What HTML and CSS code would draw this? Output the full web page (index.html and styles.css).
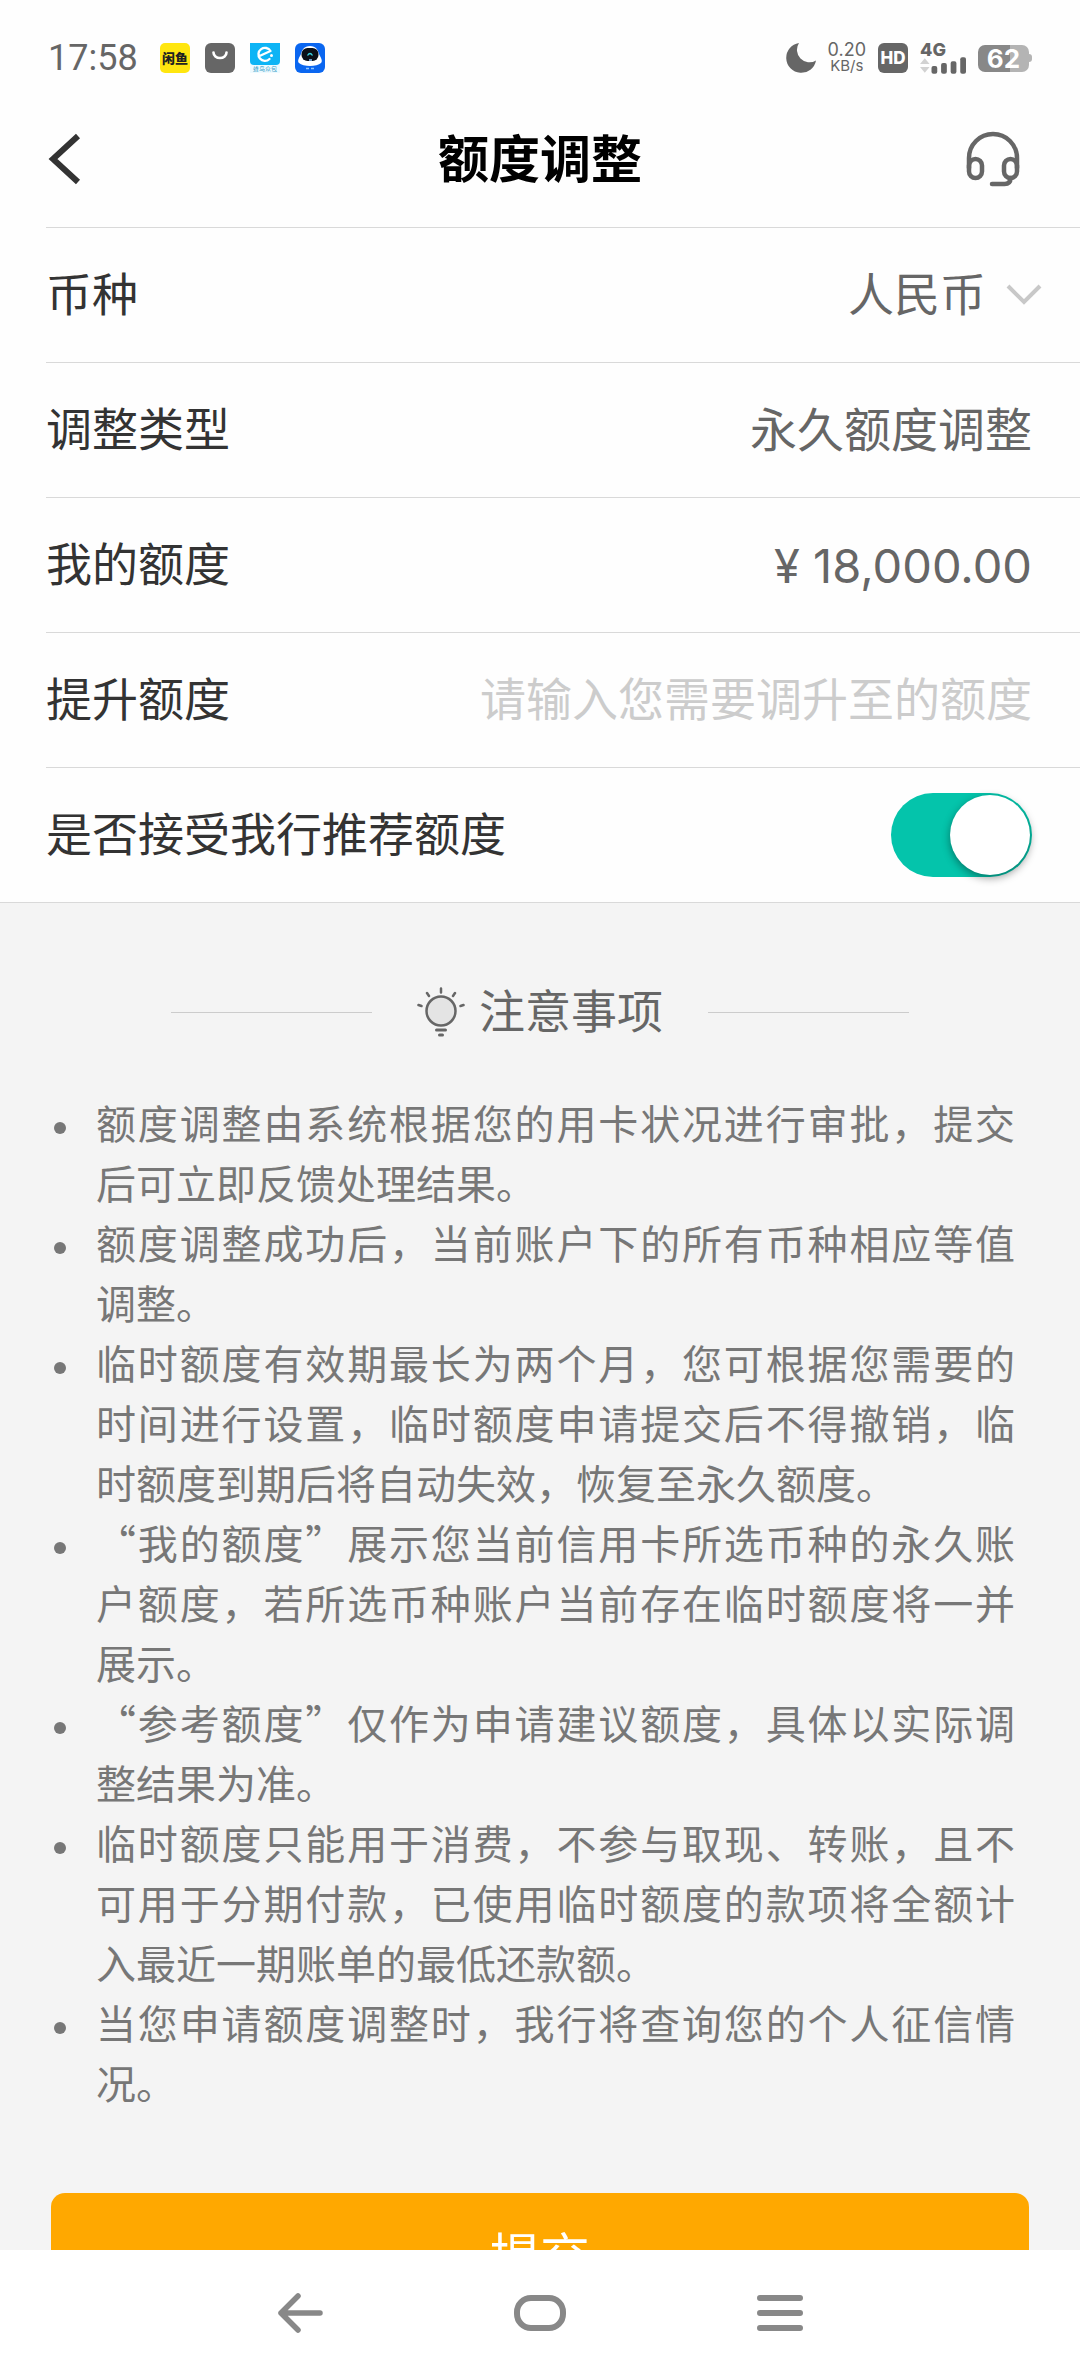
FILE: index.html
```html
<!DOCTYPE html>
<html lang="zh-CN">
  <head>
    <meta charset="UTF-8" />
    <meta name="viewport" content="width=device-width, initial-scale=1.0" />
    <title>额度调整</title>
    <link rel="stylesheet" href="styles.css">
  </head>
  <body>
    <div class="status-bar">
      <div class="status-left">
        <span class="time">17:58</span>
        <span class="app-icon app-fish">闲鱼</span>
        <svg class="app-icon" viewBox="0 0 30 30">
          <rect width="30" height="30" rx="6" fill="#666" />
          <path d="M8.500 9.500a6.500 5.500 0 0 0 13 0" fill="none" stroke="#fff" stroke-width="2.600" stroke-linecap="round" />
        </svg>
        <span class="app-icon app-ele">
          <svg viewBox="0 0 30 22">
            <path d="M0 0h30v18q0 4-4 4H4q-4 0-4-4z" fill="#0db4f5" />
            <path d="M9.500 13L20.500 8A6.500 6.500 0 1 0 19.500 16" fill="none" stroke="#fff" stroke-width="2.300" stroke-linecap="round" stroke-linejoin="round" />
            <circle cx="21.500" cy="12.500" r="1.500" fill="#fff" />
          </svg>
          <span class="app-ele-name">蜂鸟众包</span>
        </span>
        <svg class="app-icon" viewBox="0 0 30 30">
          <rect width="30" height="30" rx="6" fill="#0a66f0" />
          <path d="M15 3C9 3 7 7 6 11c-2 4-4 7-2 9 4 4 18 4 22 0 2-2 0-5-2-9-1-4-3-8-9-8z" fill="#fff" />
          <rect x="6.500" y="5" width="17" height="13" rx="6" fill="#0a0f18" />
          <path d="M12.500 12.500q2.500-4 5 0" fill="none" stroke="#39d0e0" stroke-width="1.300" />
          <path d="M14 17h3M11 25.500h3M16 25.500h3" stroke="#8ec5ff" stroke-width="1.500" />
        </svg>
      </div>
      <div class="status-right">
        <svg class="moon" viewBox="0 0 30 30">
          <path d="M13 0A15 15 0 1 0 30 17.500 A12.500 12.500 0 0 1 13 0z" fill="#666" />
        </svg>
        <div class="net-speed">
          <span class="net-value">0.20</span>
          <span class="net-unit">KB/s</span>
        </div>
        <span class="hd">HD</span>
        <div class="signal">
          <span class="signal-type">4G</span>
          <svg class="signal-bars" viewBox="0 0 48 17">
            <path d="M0 7l5-6 5 6zM0 10l5 6 5-6z" fill="#d2d2d2" />
            <g fill="#666">
              <rect x="12" y="9" width="6" height="8" rx="2" />
              <rect x="22" y="6" width="6" height="11" rx="2" />
              <rect x="32" y="4" width="6" height="13" rx="2" />
              <rect x="42" y="0" width="6" height="17" rx="2" />
            </g>
          </svg>
        </div>
        <div class="battery">
          <span class="battery-level">62</span>
        </div>
      </div>
    </div>

    <header class="header">
      <button class="header-btn" type="button" aria-label="返回">
        <svg width="36" height="52" viewBox="0 0 36 52">
          <path d="M33 3L8 26l25 23" fill="none" stroke="#333" stroke-width="6" />
        </svg>
      </button>
      <h1 class="title">额度调整</h1>
      <button class="header-btn header-service" type="button" aria-label="客服">
        <svg width="54" height="56" viewBox="0 0 54 56">
          <g fill="none" stroke="#666" stroke-width="4.500" stroke-linecap="round">
            <path d="M3 37V27a24 24 0 0 1 48 0v10" />
            <rect x="3" y="28" width="13" height="19" rx="6.500" />
            <rect x="38" y="28" width="13" height="19" rx="6.500" />
            <path d="M44.500 47c0 4-2 6-6 6H26" />
          </g>
        </svg>
      </button>
    </header>

    <main class="main">
      <form class="form">
        <div class="rows">
          <div class="row">
            <label class="label" for="currency">币种</label>
            <div class="picker">
              <select class="value select" id="currency">
                <option>人民币</option>
              </select>
              <svg class="arrow" width="36" height="22" viewBox="0 0 36 22">
                <path d="M2 2l16 16L34 2" fill="none" stroke="#c8c8c8" stroke-width="4" />
              </svg>
            </div>
          </div>
          <div class="row">
            <span class="label">调整类型</span>
            <span class="value fixed">永久额度调整</span>
          </div>
          <div class="row">
            <span class="label">我的额度</span>
            <span class="value fixed amount">¥ 18,000.00</span>
          </div>
          <div class="row">
            <label class="label" for="limit">提升额度</label>
            <input class="value input" id="limit" type="text" inputmode="decimal" placeholder="请输入您需要调升至的额度">
          </div>
          <div class="row">
            <label class="label" for="accept">是否接受我行推荐额度</label>
            <input class="switch" id="accept" type="checkbox" role="switch" checked>
          </div>
        </div>

        <section class="notes">
          <h2 class="notes-title">
            <svg class="bulb" width="48" height="50" viewBox="0 0 48 50">
              <g fill="none" stroke="#666" stroke-width="2.500" stroke-linecap="round">
                <circle cx="24" cy="24" r="14.500" fill="#e4e4e4" />
                <path d="M24 1.500v4M10 6l2 3M38 6l-2 3M1.500 18l3 1M46.500 18l-3 1" />
                <path d="M19.500 43h9M22.500 48h3" stroke-width="3" />
              </g>
            </svg>
            <span class="notes-name">注意事项</span>
          </h2>
          <ul class="notes-list">
            <li><p>额度调整由系统根据您的用卡状况进行审批，提交后可立即反馈处理结果。</p></li>
            <li><p>额度调整成功后，当前账户下的所有币种相应等值调整。</p></li>
            <li><p>临时额度有效期最长为两个月，您可根据您需要的时间进行设置，临时额度申请提交后不得撤销，临时额度到期后将自动失效，恢复至永久额度。</p></li>
            <li><p>“我的额度”展示您当前信用卡所选币种的永久账户额度，若所选币种账户当前存在临时额度将一并展示。</p></li>
            <li><p>“参考额度”仅作为申请建议额度，具体以实际调整结果为准。</p></li>
            <li><p>临时额度只能用于消费，不参与取现、转账，且不可用于分期付款，已使用临时额度的款项将全额计入最近一期账单的最低还款额。</p></li>
            <li><p>当您申请额度调整时，我行将查询您的个人征信情况。</p></li>
          </ul>
        </section>

        <button class="submit" type="button">提交</button>
      </form>
    </main>

    <nav class="nav-bar">
      <button class="nav-btn" type="button" aria-label="返回">
        <svg width="46" height="40" viewBox="0 0 46 40">
          <path d="M43 20H4M21 3L4 20l17 17" fill="none" stroke="#888" stroke-width="5.500" stroke-linecap="round" stroke-linejoin="round" />
        </svg>
      </button>
      <button class="nav-btn" type="button" aria-label="主页">
        <svg width="52" height="36" viewBox="0 0 52 36">
          <rect x="3" y="3" width="46" height="30" rx="14" fill="none" stroke="#888" stroke-width="6" />
        </svg>
      </button>
      <button class="nav-btn" type="button" aria-label="最近任务">
        <svg width="46" height="36" viewBox="0 0 46 36">
          <path d="M3 3h40M3 18h40M3 33h40" stroke="#888" stroke-width="6" stroke-linecap="round" />
        </svg>
      </button>
    </nav>
  </body>
</html>
```

FILE: styles.css
```css
* {
  box-sizing: border-box;
}

body {
  margin: 0;
  height: 100vh;
  display: flex;
  flex-direction: column;
  background: #fefefe;
  color: #333;
  font-family: "Noto Sans CJK SC", sans-serif;
  font-size: 46px;
}

button,
input,
select {
  margin: 0;
  padding: 0;
  border: 0;
  background: none;
  font: inherit;
}

svg {
  display: block;
}

/* Status bar */
.status-bar {
  flex: none;
  height: 116px;
  padding: 0 48px;
  display: flex;
  align-items: center;
  justify-content: space-between;
  color: #666;
  font-family: Inter, sans-serif;
}

.status-left,
.status-right {
  display: flex;
  align-items: center;
}

.status-left {
  gap: 15px;
}

.status-right {
  gap: 12px;
}

.time {
  width: 97px;
  font-family: Roboto, sans-serif;
  font-size: 36px;
  line-height: 40px;
}

.app-icon {
  width: 30px;
  height: 30px;
}

.app-fish {
  border-radius: 5px;
  background: #ffe60f;
  color: #222;
  font-family: "Noto Sans CJK SC", sans-serif;
  font-size: 13px;
  font-weight: 900;
  line-height: 30px;
  text-align: center;
}

.app-ele {
  display: flex;
  flex-direction: column;
  background: #eefaff;
}

.app-ele-name {
  color: #3aa0c8;
  font-family: "Noto Sans CJK SC", sans-serif;
  font-size: 6px;
  line-height: 8px;
  text-align: center;
}

.moon {
  width: 30px;
  height: 30px;
}

.net-speed {
  display: flex;
  flex-direction: column;
  align-items: center;
  font-size: 18px;
  line-height: 16px;
}

.net-unit {
  font-size: 15px;
}

.hd {
  width: 30px;
  height: 30px;
  border-radius: 6px;
  background: #666;
  color: #fff;
  font-size: 17px;
  font-weight: 800;
  line-height: 30px;
  text-align: center;
}

.signal {
  display: flex;
  flex-direction: column;
  font-size: 18px;
  font-weight: 800;
  line-height: 14px;
}

.signal-bars {
  width: 46px;
  height: 17px;
}

.battery {
  display: flex;
  align-items: center;
}

.battery-level {
  width: 51px;
  height: 27px;
  border-radius: 7px;
  background: linear-gradient(to right, #888 62%, #b4b4b4 62%);
  color: #fff;
  font-size: 26px;
  font-weight: 700;
  line-height: 27px;
  text-align: center;
}

.battery::after {
  content: "";
  width: 3px;
  height: 8px;
  border-radius: 0 3px 3px 0;
  background: #b4b4b4;
}

/* Header */
.header {
  flex: none;
  padding: 0 45px 25px;
  display: flex;
  align-items: center;
  justify-content: space-between;
}

.header-btn {
  width: 69px;
  height: 86px;
  display: flex;
  align-items: center;
}

.header-service {
  justify-content: flex-start;
}

.title {
  margin: 0;
  padding-bottom: 6px;
  color: #000;
  font-size: 51px;
  font-weight: 700;
  line-height: 80px;
}

/* Content */
.main {
  flex: 1;
  min-height: 0;
  overflow-y: auto;
  scrollbar-width: none;
  background: #f4f4f4;
}

.rows {
  padding-left: 46px;
  border-bottom: 1px solid #d9d9d9;
  background: #fefefe;
}

.row {
  height: 135px;
  padding-right: 48px;
  display: flex;
  align-items: center;
  justify-content: space-between;
  border-top: 1px solid #d9d9d9;
}

.label,
.value {
  padding-bottom: 8px;
}

.value {
  color: #666;
  text-align: right;
}

.picker {
  display: flex;
  align-items: center;
  gap: 20px;
  margin-right: -10px;
}

.select {
  appearance: none;
  outline: none;
}

.fixed {
  font-size: 47px;
}

.amount {
  padding-bottom: 0;
  font-family: Inter, "Noto Sans CJK SC", sans-serif;
}

.input {
  flex: 1;
  min-width: 0;
  outline: none;
}

.input::placeholder {
  color: #ccc;
}

.switch {
  appearance: none;
  width: 141px;
  height: 84px;
  padding: 2px;
  display: flex;
  border-radius: 42px;
  background: #ddd;
}

.switch::before {
  content: "";
  width: 80px;
  height: 80px;
  border-radius: 50%;
  background: #fff;
  box-shadow: 0 3px 8px rgba(0, 0, 0, 0.4);
}

.switch:checked {
  justify-content: flex-end;
  background: #04c4ab;
}

/* Notes */
.notes {
  padding-top: 74px;
  color: #777;
}

.notes-title {
  margin: 0;
  display: flex;
  align-items: center;
  justify-content: center;
  color: #666;
  font-size: 46px;
  font-weight: 400;
  line-height: 62px;
}

.notes-title::before,
.notes-title::after {
  content: "";
  width: 201px;
  height: 1px;
  background: #ccc;
}

.bulb {
  margin: 0 14px 0 45px;
}

.notes-name {
  margin-right: 45px;
  padding-bottom: 8px;
}

.notes-list {
  margin: 45px 65px 81px 54px;
  padding: 0;
  list-style: none;
  font-size: 40px;
  line-height: 60px;
}

.notes-list li {
  display: flex;
  gap: 30px;
}

.notes-list li::before {
  content: "";
  flex: none;
  width: 12px;
  height: 12px;
  margin-top: 30px;
  border-radius: 50%;
  background: #777;
}

.notes-list p {
  flex: 1;
  margin: 0;
  text-align: justify;
}

.submit {
  width: calc(100% - 102px);
  height: 126px;
  margin: 0 51px 60px;
  padding-bottom: 6px;
  display: block;
  border-radius: 14px;
  background: #ffa800;
  color: #fff;
  font-size: 50px;
}

/* System navigation */
.nav-bar {
  flex: none;
  height: 126px;
  display: flex;
  align-items: center;
  justify-content: center;
  background: #fff;
}

.nav-btn {
  width: 240px;
  height: 100%;
  display: flex;
  align-items: center;
  justify-content: center;
}
```
